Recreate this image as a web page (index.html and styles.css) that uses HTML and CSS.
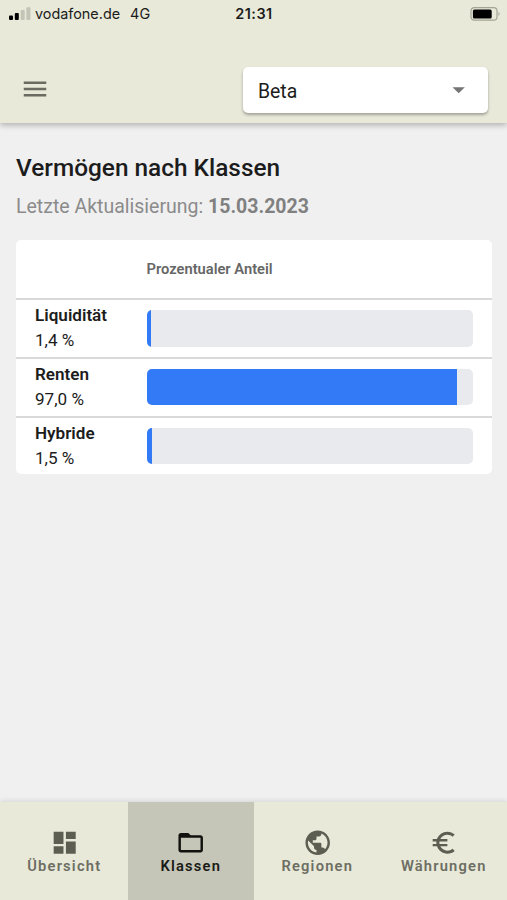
FILE: index.html
```
<!DOCTYPE html>
<html lang="de">
<head>
<meta charset="utf-8">
<title>Vermögen nach Klassen</title>
<link rel="stylesheet" href="styles.css">
</head>
<body>
<header class="top">
  <div class="status">
    <div class="carrier">
      <svg class="signal" width="22" height="14" viewBox="0 0 22 14"><rect x="0" y="8.5" width="4" height="4.5" rx="1"/><rect x="5.8" y="6" width="4" height="7" rx="1"/><g fill="#c3c4b6"><rect x="11.7" y="3" width="4" height="10" rx="1"/><rect x="17.4" y="0.3" width="4" height="12.7" rx="1"/></g></svg>
      <span class="operator">vodafone.de</span><span class="network">4G</span>
    </div>
    <div class="clock">21:31</div>
    <svg class="battery" width="32" height="16" viewBox="0 0 32 16"><rect x="1" y="1.6" width="26" height="12.6" rx="3.2" fill="none" stroke="#a3a496" stroke-width="1.2"/><rect x="2.9" y="3.4" width="18.8" height="9" rx="1.5"/><path d="M28.5 5.8q2.2 2.1 0 4.2z" fill="#a3a496"/></svg>
  </div>
  <div class="toolbar">
    <svg class="menu" viewBox="0 0 24 24"><path d="M3 18h18v-2H3v2zm0-5h18v-2H3v2zm0-7v2h18V6H3z"/></svg>
    <div class="select"><span>Beta</span><svg class="arrow" viewBox="0 0 24 24"><path d="M7 10l5 5 5-5z"/></svg></div>
  </div>
</header>
<main>
  <h1>Vermögen nach Klassen</h1>
  <p class="updated">Letzte Aktualisierung: <b>15.03.2023</b></p>
  <section class="card">
    <div class="head">Prozentualer Anteil</div>
    <div class="row"><div class="label"><b>Liquidität</b><span>1,4 %</span></div><div class="track"><div class="fill" style="width:1.4%"></div></div></div>
    <div class="row"><div class="label"><b>Renten</b><span>97,0 %</span></div><div class="track"><div class="fill" style="width:95.1%"></div></div></div>
    <div class="row"><div class="label"><b>Hybride</b><span>1,5 %</span></div><div class="track"><div class="fill" style="width:1.5%"></div></div></div>
  </section>
</main>
<nav>
  <div class="tab"><svg viewBox="0 0 24 24"><path d="M3 13h8V3H3v10zm0 8h8v-6H3v6zm10 0h8V11h-8v10zm0-18v6h8V3h-8z"/></svg><span>Übersicht</span></div>
  <div class="tab active"><svg viewBox="0 0 24 24"><path d="M20 6h-8l-2-2H4c-1.1 0-1.99.9-1.99 2L2 18c0 1.1.9 2 2 2h16c1.1 0 2-.9 2-2V8c0-1.1-.9-2-2-2zm0 12H4V8h16v10z"/></svg><span>Klassen</span></div>
  <div class="tab"><svg viewBox="0 0 24 24"><path d="M12 2C6.48 2 2 6.48 2 12s4.48 10 10 10 10-4.48 10-10S17.52 2 12 2zm-1 17.93c-3.95-.49-7-3.85-7-7.93 0-.62.08-1.21.21-1.79L9 15v1c0 1.1.9 2 2 2v1.93zm6.9-2.54c-.26-.81-1-1.39-1.9-1.39h-1v-3c0-.55-.45-1-1-1H8v-2h2c.55 0 1-.45 1-1V7h2c1.1 0 2-.9 2-2v-.41c2.93 1.19 5 4.06 5 7.41 0 2.08-.8 3.97-2.1 5.39z"/></svg><span>Regionen</span></div>
  <div class="tab"><svg viewBox="0 0 24 24"><path d="M15 18.5c-2.51 0-4.68-1.42-5.76-3.5H15v-2H8.58c-.05-.33-.08-.66-.08-1s.03-.67.08-1H15V9H9.24C10.32 6.92 12.5 5.5 15 5.5c1.61 0 3.09.59 4.23 1.57L21 5.3C19.41 3.87 17.3 3 15 3c-3.92 0-7.24 2.51-8.48 6H3v2h3.06c-.04.33-.06.66-.06 1s.02.67.06 1H3v2h3.52c1.24 3.49 4.56 6 8.48 6 2.31 0 4.41-.87 6-2.3l-1.78-1.77c-1.13.98-2.6 1.57-4.22 1.57z"/></svg><span>Währungen</span></div>
</nav>
</body>
</html>
```
FILE: styles.css
```
* { box-sizing: border-box; }
body {
  margin: 0;
  height: 900px;
  display: flex;
  flex-direction: column;
  overflow: hidden;
  background: #f0f0f0;
  color: #1c1c1c;
  font-family: Roboto, "Liberation Sans", sans-serif;
}
svg { display: block; flex: none; }
.top {
  height: 123px;
  flex: none;
  background: #e8e9d9;
  box-shadow: 0 2px 6px rgba(0, 0, 0, .28);
}
.status {
  height: 28px;
  display: grid;
  grid-template-columns: 1fr auto 1fr;
  align-items: center;
  padding: 0 5px 0 9px;
  font: 14.4px/28px Inter, sans-serif;
}
.carrier { display: flex; align-items: center; }
.signal { margin-right: 4px; }
.network { margin-left: 10px; }
.clock { font-weight: 600; letter-spacing: .5px; margin: 0 3px 0 0; }
.battery { justify-self: end; margin-top: -1px; }
.toolbar {
  display: flex;
  justify-content: space-between;
  align-items: center;
  margin-top: 39px;
  padding: 0 19px 0 20px;
}
.menu { width: 30px; height: 30px; fill: #6b6b61; margin-top: -2px; }
.select {
  width: 245px;
  height: 46px;
  display: flex;
  align-items: center;
  justify-content: space-between;
  padding: 2px 15px 0;
  border-radius: 5px;
  background: #fff;
  box-shadow: 0 2px 3px rgba(0, 0, 0, .3);
  font-size: 19.4px;
}
.arrow { width: 29.4px; height: 29.4px; fill: #757575; margin-top: -2px; }
main { flex: 1; padding: 29px 15px 0 16px; }
h1 {
  margin: 0;
  font-size: 24.4px;
  line-height: 32px;
  font-weight: 500;
}
.updated {
  margin: 8px 0 0;
  font-size: 19.5px;
  line-height: 30px;
  color: #8b8b8b;
}
.updated b { color: #808080; }
.card {
  margin-top: 18px;
  border-radius: 5px;
  background: #fff;
}
.head {
  height: 58px;
  padding-left: 130.5px;
  font-size: 14.7px;
  line-height: 59px;
  font-weight: 600;
  color: #666;
}
.row {
  height: 58.8px;
  display: flex;
  align-items: center;
  padding: 0 19px;
  border-top: 2px solid #d9d9d9;
}
.label {
  width: 111.7px;
  display: flex;
  flex-direction: column;
  font-size: 17.1px;
  line-height: 25px;
}
.label b { font-weight: 600; }
.track {
  flex: 1;
  height: 36.6px;
  overflow: hidden;
  border-radius: 5px;
  background: #e9eaed;
}
.fill { height: 100%; background: #337af7; }
nav {
  height: 98px;
  flex: none;
  display: grid;
  grid-template-columns: repeat(4, 1fr);
  padding-left: 1px;
  background: #e8e9d9;
  box-shadow: 0 -1px 5px rgba(0, 0, 0, .12);
}
.tab {
  display: flex;
  flex-direction: column;
  align-items: center;
  padding-top: 26px;
  font-size: 14.7px;
  line-height: 18px;
  font-weight: 600;
  letter-spacing: 1.2px;
  color: #6d6e63;
}
.tab svg { width: 29.4px; height: 29.4px; fill: #5d5e52; }
.active { background: #c5c5b8; color: #1a1b16; }
.active svg { fill: #11120e; }
```
